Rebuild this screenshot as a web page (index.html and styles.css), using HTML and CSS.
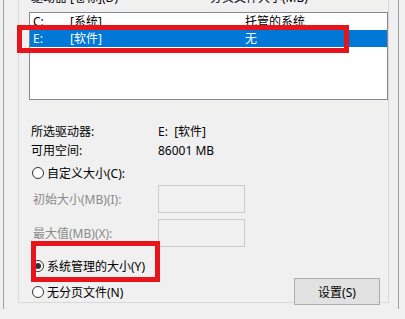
FILE: index.html
```html
<!DOCTYPE html>
<html lang="zh-CN">
<head>
<meta charset="utf-8">
<link rel="stylesheet" href="styles.css">
</head>
<body>
<div class="outer">
  <div class="group">
    <div class="hdr"><span class="hc1">驱动器 [卷标](D)</span><span class="hc2">分页文件大小(MB)</span></div>
    <div class="list">
      <div class="row"><span>C:</span><span>[系统]</span><span>托管的系统</span></div>
      <div class="row sel"><span>E:</span><span>[软件]</span><span>无</span></div>
    </div>
    <div class="info">
      <span>所选驱动器:</span><span>E:&nbsp;&nbsp;[软件]</span>
      <span>可用空间:</span><span>86001 MB</span>
    </div>
    <div class="radio r1"><span class="dot"></span>自定义大小(C):</div>
    <div class="field f1"><span class="dis">初始大小(MB)(I):</span><span class="box"></span></div>
    <div class="field f2"><span class="dis">最大值(MB)(X):</span><span class="box"></span></div>
    <div class="radio r2"><span class="dot on"></span>系统管理的大小(Y)</div>
    <div class="last">
      <div class="radio"><span class="dot"></span>无分页文件(N)</div>
      <div class="btn">设置(S)</div>
    </div>
  </div>
</div>
<div class="mark m1"></div>
<div class="mark m2"></div>
</body>
</html>
```
FILE: styles.css
```css
html, body {
  margin: 0;
  padding: 0;
}
body {
  width: 405px;
  height: 319px;
  overflow: hidden;
  background: #f0f0f0;
  font-family: "Noto Sans", "Noto Sans CJK SC", sans-serif;
  font-size: 12px;
  color: #000;
  position: relative;
}
.outer {
  margin-left: 3px;
  width: 394px;
  height: 319px;
  border-left: 1px solid #a0a0a0;
  border-right: 1px solid #a0a0a0;
}
.group {
  margin-left: 14px;
  width: 369px;
  height: 312px;
  border-left: 1px solid #d9d9d9;
  border-right: 1px solid #d9d9d9;
  border-bottom: 1px solid #d9d9d9;
}
.hdr {
  margin-top: -10px;
  height: 16px;
  line-height: 16px;
  display: flex;
  padding-left: 12px;
}
.hc1 { width: 179px; }
.list {
  margin-top: 6px;
  margin-left: 10px;
  width: 357px;
  height: 86px;
  border: 1px solid #828790;
  background: #fff;
}
.row {
  display: grid;
  grid-template-columns: 37px 175px 1fr;
  height: 17px;
  line-height: 17px;
  padding-left: 3px;
}
.row.sel {
  background: #0078d7;
  color: #fff;
}
.info {
  margin-top: 22px;
  padding-left: 12px;
  display: grid;
  grid-template-columns: 127px 1fr;
  line-height: 19px;
}
.radio {
  display: flex;
  align-items: center;
  height: 18px;
  padding-left: 13px;
}
.r1 { margin-top: 4px; }
.r2 { margin-top: 10px; }
.dot {
  width: 10px;
  height: 10px;
  border: 1px solid #333;
  border-radius: 50%;
  background: #fff;
  margin-right: 3px;
  box-sizing: content-box;
  position: relative;
}
.dot.on::after {
  content: "";
  position: absolute;
  left: 2px;
  top: 2px;
  width: 6px;
  height: 6px;
  border-radius: 50%;
  background: #333;
}
.field {
  display: flex;
  align-items: center;
  padding-left: 14px;
  height: 28px;
}
.f1 { margin-top: 3px; }
.f2 { margin-top: 6px; }
.dis {
  width: 125px;
  color: #8a8a8a;
}
.box {
  width: 85px;
  height: 26px;
  border: 1px solid #cccccc;
  background: #f0f0f0;
}
.last {
  margin-top: 3px;
  display: flex;
  align-items: center;
  justify-content: space-between;
  height: 27px;
  padding-right: 8px;
}
.last .radio { padding-left: 13px; }
.btn {
  width: 84px;
  height: 25px;
  border: 1px solid #adadad;
  background: #e1e1e1;
  display: flex;
  align-items: center;
  justify-content: center;
}
.mark {
  position: absolute;
  border: 5px solid #e8141c;
  box-sizing: border-box;
}
.m1 { left: 17px; top: 25px; width: 332px; height: 28px; }
.m2 { left: 31px; top: 241px; width: 129px; height: 41px; }
```
